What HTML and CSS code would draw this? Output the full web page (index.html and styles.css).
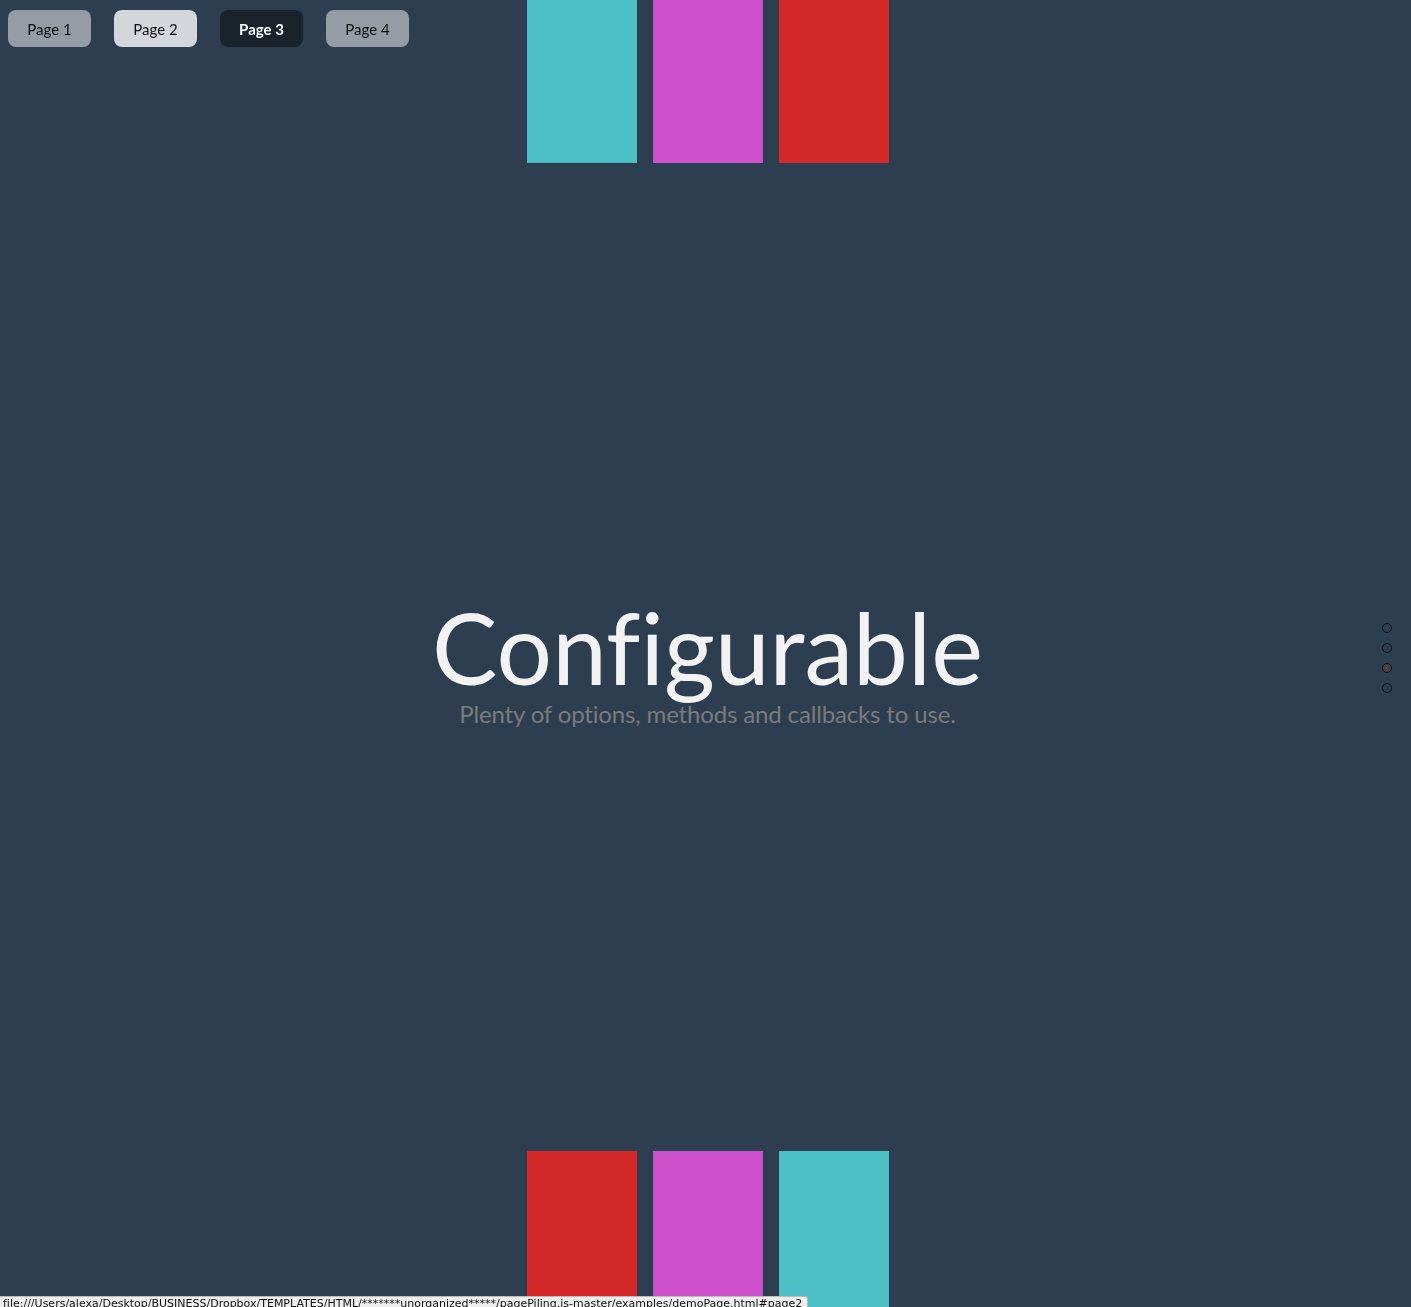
FILE: index.html
```html
<!DOCTYPE html>
<html>
<head>
<meta charset="utf-8">
<link rel="stylesheet" href="styles.css">
</head>
<body>
<div class="page">
  <div class="bars top">
    <div class="bar cyan"></div>
    <div class="bar magenta"></div>
    <div class="bar red"></div>
  </div>
  <div class="middle">
    <h1 class="title">Configurable</h1>
    <p class="subtitle">Plenty of options, methods and callbacks to use.</p>
  </div>
  <div class="bars bottom">
    <div class="bar red"></div>
    <div class="bar magenta"></div>
    <div class="bar cyan"></div>
  </div>
</div>
<nav class="menu">
  <a class="btn btn-grey">Page 1</a>
  <a class="btn btn-light">Page 2</a>
  <a class="btn btn-dark">Page 3</a>
  <a class="btn btn-grey">Page 4</a>
</nav>
<ul class="dots">
  <li class="dot"></li>
  <li class="dot"></li>
  <li class="dot active"></li>
  <li class="dot"></li>
</ul>
<div class="status">file:///Users/alexa/Desktop/BUSINESS/Dropbox/TEMPLATES/HTML/*******unorganized*****/pagePiling.js-master/examples/demoPage.html#page2</div>
</body>
</html>
```
FILE: styles.css
```css
html, body {
  margin: 0;
  padding: 0;
  height: 100%;
}
body {
  background: #2d3e50;
  font-family: Lato, "Open Sans", sans-serif;
  overflow: hidden;
  font-variant-ligatures: none;
}
.page {
  height: 1307px;
  display: grid;
  grid-template-rows: 163px 1fr 156px;
}
.bars {
  display: flex;
  justify-content: center;
  gap: 16px;
  padding-left: 4px;
}
.bar {
  width: 110px;
  height: 100%;
}
.cyan { background: #4bbfc3; }
.magenta { background: #cd51cd; }
.red { background: #d52828; }
.middle {
  display: flex;
  flex-direction: column;
  align-items: center;
  justify-content: center;
  padding-top: 12px;
  padding-left: 4px;
}
.title {
  margin: 0;
  font-size: 98px;
  font-weight: 400;
  line-height: 1;
  color: #f2f2f2;
}
.subtitle {
  margin: 4px 0 0;
  font-size: 24px;
  line-height: 28px;
  color: #7b7b7b;
  letter-spacing: -0.15px;
}
.menu {
  position: fixed;
  top: 10px;
  left: 8px;
  display: flex;
  gap: 23px;
}
.btn {
  width: 83px;
  height: 37px;
  border-radius: 8px;
  display: flex;
  align-items: center;
  justify-content: center;
  font-size: 15px;
  color: #111;
  padding-top: 1px;
  box-sizing: border-box;
}
.btn-grey { background: #959ca5; }
.btn-light { background: #d3d6da; }
.btn-dark { background: #1a222c; color: #fff; font-weight: 700; }
.dots {
  position: fixed;
  right: 19px;
  top: 623px;
  margin: 0;
  padding: 0;
  list-style: none;
  display: flex;
  flex-direction: column;
  gap: 10px;
}
.dot {
  width: 8px;
  height: 8px;
  border: 1px solid #111;
  border-radius: 50%;
}
.dot.active { background: #444; }
.status {
  position: fixed;
  left: 0;
  bottom: 0;
  width: 808px;
  height: 11px;
  box-sizing: border-box;
  background: #eee;
  border: 1px solid #bbb;
  border-left: 0;
  border-bottom: 0;
  border-top-right-radius: 3px;
  font-family: "DejaVu Sans", sans-serif;
  font-size: 11px;
  line-height: 13px;
  padding-left: 3px;
  color: #111;
  white-space: nowrap;
  overflow: hidden;
}
```
